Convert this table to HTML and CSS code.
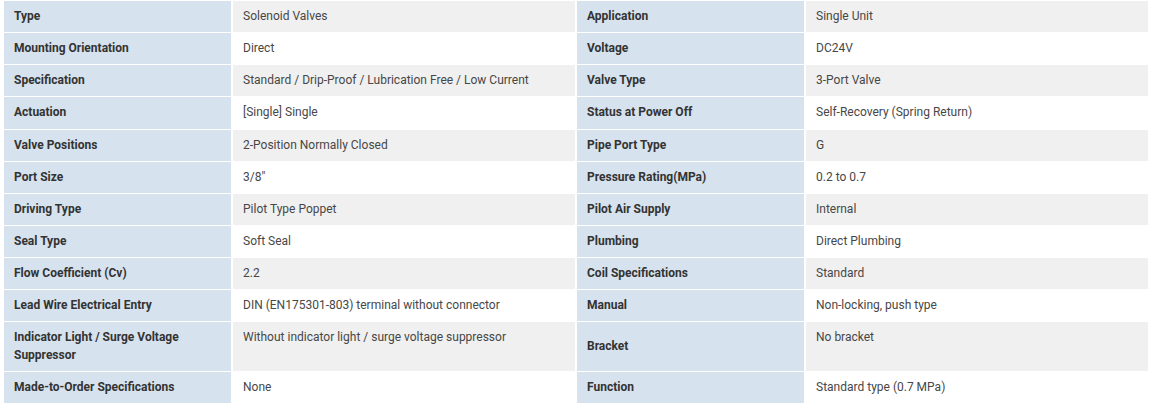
FILE: index.html
```html
<!DOCTYPE html>
<html lang="en">
<head>
<meta charset="utf-8">
<title>Specifications</title>
<link rel="stylesheet" href="styles.css">
</head>
<body>
<table class="spec">
  <colgroup>
    <col class="c-label"><col class="c-value"><col class="c-label"><col class="c-value">
  </colgroup>
  <tbody>
    <tr><th>Type</th><td>Solenoid Valves</td><th>Application</th><td>Single Unit</td></tr>
    <tr><th>Mounting Orientation</th><td>Direct</td><th>Voltage</th><td>DC24V</td></tr>
    <tr><th>Specification</th><td>Standard / Drip-Proof / Lubrication Free / Low Current</td><th>Valve Type</th><td>3-Port Valve</td></tr>
    <tr><th>Actuation</th><td>[Single] Single</td><th>Status at Power Off</th><td>Self-Recovery (Spring Return)</td></tr>
    <tr><th>Valve Positions</th><td>2-Position Normally Closed</td><th>Pipe Port Type</th><td>G</td></tr>
    <tr><th>Port Size</th><td>3/8"</td><th>Pressure Rating(MPa)</th><td>0.2 to 0.7</td></tr>
    <tr><th>Driving Type</th><td>Pilot Type Poppet</td><th>Pilot Air Supply</th><td>Internal</td></tr>
    <tr><th>Seal Type</th><td>Soft Seal</td><th>Plumbing</th><td>Direct Plumbing</td></tr>
    <tr><th>Flow Coefficient (Cv)</th><td>2.2</td><th>Coil Specifications</th><td>Standard</td></tr>
    <tr><th>Lead Wire Electrical Entry</th><td>DIN (EN175301-803) terminal without connector</td><th>Manual</th><td>Non-locking, push type</td></tr>
    <tr><th>Indicator Light / Surge Voltage Suppressor</th><td>Without indicator light / surge voltage suppressor</td><th>Bracket</th><td>No bracket</td></tr>
    <tr><th>Made-to-Order Specifications</th><td>None</td><th>Function</th><td>Standard type (0.7 MPa)</td></tr>
  </tbody>
</table>
</body>
</html>
```

FILE: styles.css
```css
html, body {
  margin: 0;
  padding: 0;
  background: #ffffff;
}

body {
  font-family: Roboto, "Liberation Sans", Arial, sans-serif;
  font-size: 12px;
  line-height: 1.42857;
  color: #333333;
}

.spec {
  margin-left: 2px;
  width: 1148px;
  table-layout: fixed;
  border-collapse: separate;
  border-spacing: 2px 1px;
}

.c-label { width: 227px; }
.c-value { width: 342px; }

.spec th,
.spec td {
  padding: 7px 10px;
  text-align: left;
}

.spec th {
  background: #d6e2ed;
  font-weight: 700;
  color: #333333;
  vertical-align: middle;
}

.spec td {
  font-weight: 400;
  color: #474747;
  vertical-align: top;
  background: #ffffff;
}

.spec tr:nth-child(odd) td {
  background: #f0f0f0;
}
```
